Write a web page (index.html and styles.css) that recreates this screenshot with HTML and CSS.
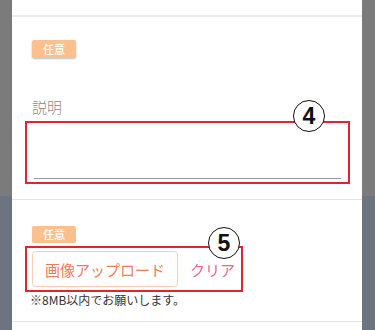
FILE: index.html
```html
<!DOCTYPE html>
<html lang="ja">
<head>
<meta charset="utf-8">
<link rel="stylesheet" href="styles.css">
</head>
<body>
<div class="panel">
  <div class="sec sec-top"></div>
  <div class="sec sec-desc">
    <span class="badge">任意</span>
    <div class="label">説明</div>
    <div class="mark-box box-desc">
      <div class="textarea"></div>
      <span class="num num4">4</span>
    </div>
  </div>
  <div class="sec sec-img">
    <span class="badge badge2">任意</span>
    <div class="mark-box box-img">
      <button class="upload">画像アップロード</button>
      <span class="clear">クリア</span>
      <span class="num num5">5</span>
    </div>
    <div class="note">※8MB以内でお願いします。</div>
  </div>
</div>
</body>
</html>
```

FILE: styles.css
```css
html, body {
  margin: 0;
  padding: 0;
}
body {
  width: 375px;
  height: 330px;
  overflow: hidden;
  background: linear-gradient(#7b7b7b 0, #7b7b7b 196px, #6c7480 196px, #6c7480 100%);
  font-family: "Noto Sans CJK JP", "Noto Sans", sans-serif;
}
.panel {
  margin-left: 12px;
  width: 350px;
  height: 330px;
  background: #fff;
}
.sec {
  border-bottom: 1px solid #e4e4e4;
}
.sec-top {
  height: 15px;
  border-bottom: 2px solid #eeeeee;
}
.sec-desc {
  padding-top: 23px;
  box-sizing: border-box;
  height: 183px;
}
.badge {
  display: block;
  margin-left: 20px;
  width: 44px;
  height: 18px;
  line-height: 18px;
  background: #fcc08e;
  color: #fff;
  font-size: 11px;
  font-weight: 500;
  text-align: center;
  border-radius: 2px;
  box-shadow: 0 1px 2px rgba(0,0,0,0.25);
}
.label {
  margin: 39px 0 0 20px;
  font-size: 15px;
  line-height: 20px;
  color: #8a8a8a;
  font-weight: 300;
}
.mark-box {
  position: relative;
  border: 2px solid #e02431;
  box-sizing: border-box;
}
.box-desc {
  margin: 4px 0 0 13px;
  width: 325px;
  height: 63px;
  padding: 0 7px;
}
.textarea {
  height: 55px;
  border-bottom: 1px solid #9a9a9a;
}
.num {
  position: absolute;
  width: 30px;
  height: 30px;
  border: 1.5px solid #111;
  border-radius: 50%;
  background: #fff;
  color: #111;
  font-family: "Liberation Sans", Arial, sans-serif;
  font-weight: 700;
  font-size: 23px;
  line-height: 30px;
  text-align: center;
}
.num4 {
  left: 266px;
  top: -23px;
}
.num5 {
  left: 181px;
  top: -21px;
}
.sec-img {
  height: 122px;
  padding-top: 26px;
  box-sizing: border-box;
}
.badge2 {
  box-shadow: none;
  height: 17px;
  line-height: 17px;
}
.box-img {
  margin: 3px 0 0 13px;
  width: 218px;
  height: 46px;
  display: flex;
  align-items: center;
  padding-left: 5px;
}
.upload {
  width: 146px;
  height: 36px;
  border: 1px solid #f8cdb8;
  border-radius: 4px;
  background: #fff;
  color: #ef7b5e;
  font-family: "Noto Sans CJK JP", "Noto Sans", sans-serif;
  font-size: 15px;
  font-weight: 400;
  padding: 0;
}
.clear {
  margin-left: 12px;
  color: #e9648f;
  font-size: 15px;
}
.note {
  margin: 0 0 0 18px;
  font-size: 12px;
  line-height: 16px;
  color: #333;
}
```
